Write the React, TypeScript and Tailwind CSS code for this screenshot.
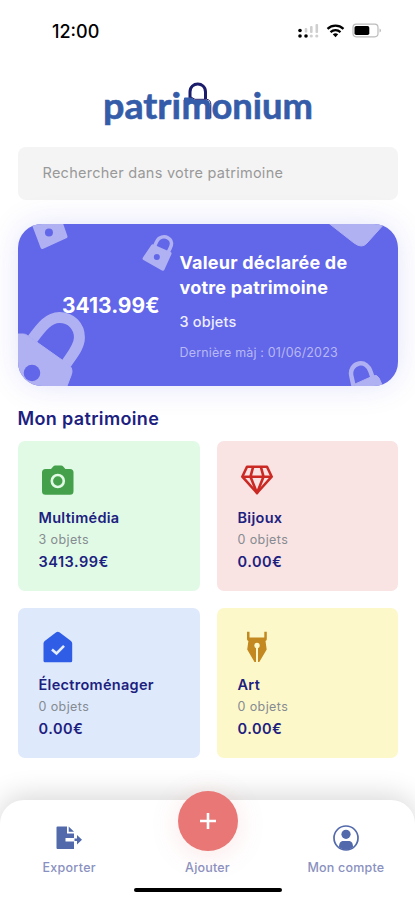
import type { ReactNode } from "react"

interface Category {
  name: string
  count: string
  value: string
  bg: string
  icon: ReactNode
}

function StatusBar() {
  return (
    <div className="flex h-[62px] items-center justify-between pl-[52px] pr-[33px]">
      <span className="text-[18px] font-medium text-black">12:00</span>
      <svg width="86" height="20" viewBox="296 21 86 20">
        <g fill="#000">
          <circle cx="300" cy="30.5" r="1.8" />
          <circle cx="300" cy="36" r="1.8" />
          <circle cx="306" cy="36" r="1.8" />
        </g>
        <g fill="#cfcfcf">
          <rect x="304.7" y="28" width="2.6" height="4.5" rx="1" />
          <rect x="310" y="26" width="2.6" height="7" rx="1" />
          <rect x="315.5" y="24" width="2.6" height="9" rx="1" />
          <circle cx="311.3" cy="36" r="1.6" />
          <circle cx="316.8" cy="36" r="1.6" />
        </g>
        <g fill="none" stroke="#000" strokeWidth="2.3">
          <path d="M327.5 28.8c4.6-4.2 11.4-4.2 16 0" />
          <path d="M330.5 32.2c3-2.6 7-2.6 10 0" />
        </g>
        <path d="M332.8 34.3c1.7-1.3 3.7-1.3 5.4 0l-2.7 3z" fill="#000" />
        <rect x="353" y="24.2" width="25" height="12.6" rx="3.2" fill="none" stroke="#bcbcbc" strokeWidth="1.2" />
        <path d="M379.5 28.5c2 .8 2 3.2 0 4z" fill="#bcbcbc" />
        <rect x="354.5" y="25.9" width="14.8" height="9.2" rx="1.8" fill="#000" />
      </svg>
    </div>
  )
}

function Logo() {
  return (
    <svg width="220" height="56" viewBox="98 76 220 56" className="mx-auto block" role="img">
      <path d="M190 99v-7c0-10.7 15.5-10.7 15.5 0v7" fill="none" stroke="#1b1c6b" strokeWidth="3" />
      <g
        fill="#355ca8"
        stroke="#355ca8"
        strokeWidth="0.6"
        fontSize="36"
        fontWeight="700"
        fontFamily="Lato, sans-serif"
      >
        <text x="103" y="118.5" textLength="78" lengthAdjust="spacingAndGlyphs">
          patri
        </text>
        <text x="181.5" y="118.5" textLength="30.5" lengthAdjust="spacingAndGlyphs">
          m
        </text>
        <text x="211.5" y="118.5" textLength="101.5" lengthAdjust="spacingAndGlyphs">
          onium
        </text>
      </g>
      {/* folder tab over the "m" */}
      <path d="M184 98.5q0-1 1-1h6.5l3.5 2.5h11q3.5 0 3.5 4v1l-6-1.5H184z" fill="#355ca8" />
      <path d="M191 97l4 2.3h11.5q4.3.4 4.3 5v14" fill="none" stroke="#1b1c6b" strokeWidth="1" />
    </svg>
  )
}

function LockPattern() {
  return (
    <svg className="absolute inset-0 h-full w-full" viewBox="17.5 224 381 162" preserveAspectRatio="none">
      <g fill="#b0b1f2" stroke="#b0b1f2" strokeLinejoin="round">
        <path d="M32.5 222l9.5 25 23-10.5-5-14.5z" strokeWidth="4" />
        <path d="M152.5 246l17 7.5-7 15.5-18.5-10.5z" strokeWidth="3.5" />
        <path
          d="M154 247c1.5-3.5 2.5-7 5-8.7 6-4 13.5.7 12 7-.8 3-2.5 5.5-4 8.500"
          fill="none"
          strokeWidth="3.5"
        />
        <path d="M329 223.5l25 19.5q8 6 13 0l18-20z" strokeWidth="1" />
        <path d="M16 334h7q2 0 4 1.5l41 29q5 4 3 10l-5 13H16z" strokeWidth="1" />
        <path d="M32 339C41 327 48 317.5 59 317.5c12 0 20 9 20 20 0 9-7 17-13 26" fill="none" strokeWidth="11" />
        <path d="M353.5 386l-2-9c-2-7 2-12.5 7.5-13.5s10 3 11.5 8l2 6" fill="none" strokeWidth="4.5" />
        <path d="M355 384l18-8q4-2 6 2l4 9h-28z" strokeWidth="1" />
      </g>
      <g fill="#6266e8">
        <circle cx="48.5" cy="232.5" r="4" />
        <circle cx="156.5" cy="257" r="3" />
        <circle cx="31.5" cy="373" r="8.3" />
      </g>
    </svg>
  )
}

function CameraIcon() {
  return (
    <svg width="36" height="34" viewBox="0 0 36 34">
      <path
        d="M12 5l2.2-2.5q.8-.9 2-.9h6q1.2 0 2 .9L26.4 5H31q3.5 0 3.5 3.5v18.7q0 3.5-3.5 3.5H6.5Q3 30.7 3 27.200V8.500Q3 5 6.500 5z"
        fill="#45a04c"
      />
      <circle cx="18.8" cy="17" r="6" fill="none" stroke="#e1fae5" strokeWidth="2.6" />
    </svg>
  )
}

function GemIcon() {
  return (
    <svg width="36" height="34" viewBox="0 0 36 34">
      <g fill="none" stroke="#cb2a24" strokeWidth="2.6" strokeLinejoin="round">
        <path d="M9 2.7h20l4.7 10L19 29 4.3 12.7z" />
        <path d="M4.3 12.7h29.4M15.2 2.7L12.5 12.7 19 29l6.5-16.3L22.8 2.7" />
      </g>
    </svg>
  )
}

function HouseIcon() {
  return (
    <svg width="36" height="34" viewBox="0 0 36 34">
      <path
        d="M17.2 1.3q1.6-1.2 3.2 0l11.6 8.7q1.2 1 1.2 2.5V29.8q0 1.5-1.5 1.5H6q-1.5 0-1.5-1.5V12.5q0-1.5 1.2-2.5z"
        fill="#305de6"
      />
      <path d="M13 18.5l4.5 4 7.5-7.7" fill="none" stroke="#e4eeff" strokeWidth="2.6" />
    </svg>
  )
}

function PenIcon() {
  return (
    <svg width="36" height="34" viewBox="0 0 36 34">
      <path
        d="M9 .7h2.5V6.5h14.8V.7H28.8v7.5q0 1.3-1.3 1.8l1.2 8.5L21.3 31H16.5L9.2 18.5l1.2-8.5Q9 9.5 9 8.2z"
        fill="#c38820"
      />
      <circle cx="19" cy="14.5" r="2.7" fill="#fdf8ca" />
      <path d="M19 15v16" stroke="#fdf8ca" strokeWidth="2" />
    </svg>
  )
}

const categories: Category[] = [
  { name: "Multimédia", count: "3 objets", value: "3413.99€", bg: "bg-[#e1fae5]", icon: <CameraIcon /> },
  { name: "Bijoux", count: "0 objets", value: "0.00€", bg: "bg-[#fae3e3]", icon: <GemIcon /> },
  { name: "Électroménager", count: "0 objets", value: "0.00€", bg: "bg-[#dee9fc]", icon: <HouseIcon /> },
  { name: "Art", count: "0 objets", value: "0.00€", bg: "bg-[#fdf8ca]", icon: <PenIcon /> },
]

function CategoryCard({ category }: { category: Category }) {
  return (
    <div className={`flex h-[150px] flex-col rounded-[7px] pl-[21px] pt-[23px] ${category.bg}`}>
      {category.icon}
      <h3 className="mt-[9px] text-[14.5px] leading-[22px] font-semibold tracking-[0.3px] text-[#1c217f]">
        {category.name}
      </h3>
      <p className="text-[12.5px] leading-[21px] tracking-[0.4px] text-[#858b91]">{category.count}</p>
      <p className="text-[14.5px] leading-[23px] font-semibold tracking-[0.5px] text-[#1c217f]">{category.value}</p>
    </div>
  )
}

function ExportIcon() {
  return (
    <svg width="26" height="26" viewBox="0 0 26 26">
      <path d="M1.5 1.5H11V8.5h7V13H9.5v3.5H18V24H1.5Q.5 24 .5 23V2.5q0-1 1-1z" fill="#5269ab" />
      <path d="M12.7 1.5L18 6.8H12.7z" fill="#5269ab" />
      <path d="M18.5 13.5h2.5V10l5 4.8-5 4.8v-3.5h-2.5z" fill="#5269ab" />
    </svg>
  )
}

function AccountIcon() {
  return (
    <svg width="26" height="26" viewBox="0 0 26 26">
      <circle cx="13" cy="13" r="12" fill="none" stroke="#5269ab" strokeWidth="1.7" />
      <circle cx="13" cy="9.3" r="4.6" fill="#5269ab" />
      <path d="M6 22c0-4.5 2-6 4.5-6h5c2.5 0 4.5 1.5 4.5 6-4 3.5-10 3.5-14 0z" fill="#5269ab" />
    </svg>
  )
}

function BottomNav() {
  return (
    <nav className="relative h-[100px] rounded-t-[24px] bg-white shadow-[0_-4px_28px_rgba(0,0,0,0.16)]">
      <div className="grid grid-cols-3 pt-[25px] text-[12.5px] leading-[18px] font-medium text-[#8a91c0]">
        <div className="flex flex-col items-center gap-[8px]">
          <ExportIcon />
          <span className="tracking-[0.3px]">Exporter</span>
        </div>
        <div className="flex flex-col items-center pt-[34px]">
          <span className="tracking-[0.2px]">Ajouter</span>
        </div>
        <div className="flex flex-col items-center gap-[8px]">
          <AccountIcon />
          <span className="tracking-[0.2px]">Mon compte</span>
        </div>
      </div>
      <button
        aria-label="Ajouter"
        className="absolute -top-[9px] left-[178px] flex h-[60px] w-[60px] items-center justify-center rounded-full bg-[#e87775] shadow-[0_4px_28px_rgba(232,119,117,0.18)]"
      >
        <svg width="18" height="18" viewBox="0 0 18 18">
          <path d="M9 1v16M1 9h16" stroke="#fff" strokeWidth="2.6" />
        </svg>
      </button>
      <div className="absolute bottom-[8px] left-[134px] h-[4.5px] w-[148px] rounded-full bg-black" />
    </nav>
  )
}

export default function App() {
  return (
    <div className="flex h-[900px] w-[415px] flex-col overflow-hidden bg-white font-[Inter,sans-serif]">
      <StatusBar />
      <div className="mt-[14px]">
        <Logo />
      </div>

      <main className="flex-1 pl-[17.5px] pr-[17px] pt-[14.5px]">
        <div className="flex h-[53px] items-center rounded-[8px] bg-[#f4f4f4] pl-[25px] text-[14.5px] tracking-[0.26px] text-[#999]">
          Rechercher dans votre patrimoine
        </div>

        <section className="relative mt-[24px] h-[162px] rounded-[24px] bg-[#6266e8] shadow-[0_0_30px_rgba(98,102,232,0.18)]">
          <div className="absolute inset-0 overflow-hidden rounded-[24px]">
            <LockPattern />
          </div>
          <div className="relative flex h-full text-white">
            <div className="flex w-[162px] items-center pl-[44.5px] pt-[2px] text-[21px] font-bold">3413.99€</div>
            <div className="pt-[26px]">
              <h2 className="text-[18px] leading-[25px] font-bold tracking-[0.22px]">
                Valeur déclarée de
                <br />
                votre patrimoine
              </h2>
              <p className="mt-[11px] text-[14.5px] leading-[22px] font-medium tracking-[0.2px] text-[#eeeeff]">
                3 objets
              </p>
              <p className="mt-[10px] text-[12.5px] leading-[20px] tracking-[0.16px] text-[#b7b8f4]">
                Dernière màj : 01/06/2023
              </p>
            </div>
          </div>
        </section>

        <h2 className="mt-[20px] text-[18px] leading-[26px] font-semibold tracking-[0.35px] text-[#1c217f]">
          Mon patrimoine
        </h2>
        <div className="mt-[9.5px] grid grid-cols-[182px_1fr] gap-[17px]">
          {categories.map((category) => (
            <CategoryCard key={category.name} category={category} />
          ))}
        </div>
      </main>

      <BottomNav />
    </div>
  )
}
